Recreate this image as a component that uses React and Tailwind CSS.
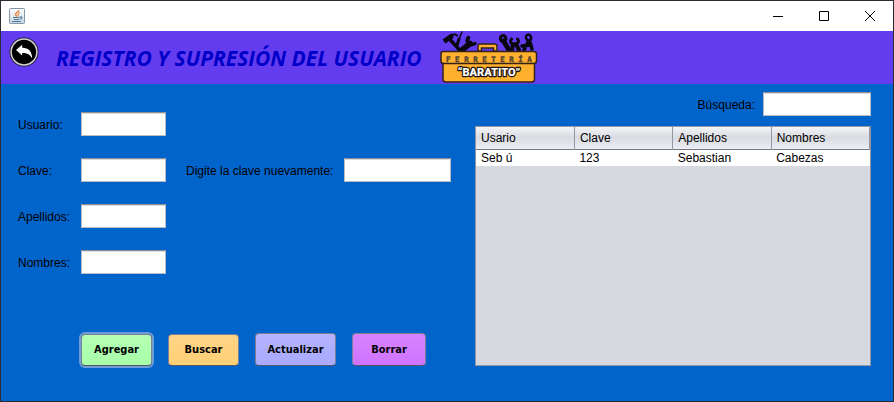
import React from "react";

const fieldClass =
  "h-6 rounded-none border border-[#b9bcc4] border-t-[#8c8e94] bg-white px-1 text-xs text-black shadow-[inset_0_1px_0_#dcdde0] outline-none";

const labelClass = "whitespace-nowrap pt-0.5 leading-4";

const buttonClass =
  "rounded-[4px] border border-[#7d7f99] border-b-[#55586c] text-center font-['DejaVu_Sans_Condensed','DejaVu_Sans',sans-serif] text-[11px] font-bold leading-4 text-black";

function JavaIcon() {
  return (
    <svg width="16" height="16" viewBox="0 0 16 16" fill="none" aria-hidden="true">
      <defs>
        <linearGradient id="java-bg" x1="0" y1="0" x2="0" y2="1">
          <stop offset="0" stopColor="#ffffff" />
          <stop offset="1" stopColor="#c9d6e2" />
        </linearGradient>
      </defs>
      <rect x=".5" y=".5" width="15" height="15" rx="1" fill="url(#java-bg)" stroke="#8296aa" />
      <path d="M9.800 2.200C10 4 5.600 5 6.500 6.800C6.900 7.500 7.700 7.800 7.800 8.600" stroke="#e8833a" strokeWidth="1.400" />
      <path d="M10.800 4.600C8.600 5.300 9.800 6.500 8.800 8.200" stroke="#e8833a" strokeWidth="1.100" />
      <path d="M4 9.500H10.800M4.800 11.500H10.200M3 13.500H12" stroke="#50789c" strokeWidth="1" />
      <path d="M11 8.900C13.800 8.400 13.400 10.900 10.800 11.300" stroke="#50789c" strokeWidth="1.100" />
    </svg>
  );
}

function BackIcon() {
  return (
    <svg width="30" height="30" viewBox="0 0 30 30" aria-hidden="true">
      <circle cx="15" cy="15" r="14.500" fill="#16131c" />
      <circle cx="15" cy="15" r="12.900" fill="#000" stroke="#d4d2d2" strokeWidth="1.500" />
      <path
        d="M7 13L13.200 7.800V10.800C19 10.600 23 14 23.200 21.500C21 17.500 18.500 15.900 13.200 15.900V18.600Z"
        fill="#fff"
      />
    </svg>
  );
}

function Logo() {
  return (
    <svg width="98" height="54" viewBox="0 0 98 54" role="img" aria-label="Ferretería Baratito">
      <g fill="none" stroke="#090811" strokeLinecap="round" strokeLinejoin="round">
        <path d="M10 9.500L20 20.500" strokeWidth="3.500" />
        <path d="M4 11.500L12.500 5.500" strokeWidth="5" strokeLinecap="butt" />
        <path d="M11 5.500Q14.500 3.500 17 5.500" strokeWidth="2.200" />
        <path d="M22 2L19 9" strokeWidth="1.500" />
        <path d="M19 9L17 15" strokeWidth="3" />
        <path d="M22 20L30 13.500" strokeWidth="5.500" />
        <path d="M28.500 7.500C25.500 11 29 17 35 13.500" strokeWidth="3.500" />
        <path d="M64 5.500C59.500 5 59 11 63.500 11.500C66 11 67 8 65 6.500" strokeWidth="3" />
        <path d="M63.500 11L69 20" strokeWidth="5" />
        <path d="M71.500 9C69 12 72 15 75 14.500C78 14 79.500 11 77.500 9" strokeWidth="3" />
        <path d="M73 14L72 20M76 14L79 20" strokeWidth="4" />
        <path d="M86.500 9C84 5 90 2.500 91 7C92 10 88 12 86.500 9Z" strokeWidth="2.500" />
        <path d="M88 12L84 20M90 12L92 19M82 16L90 15" strokeWidth="3.500" />
      </g>
      <path
        d="M38 21V16Q38 14 40 14H55Q57 14 57 16V21H53.500V18H41.500V21Z"
        fill="#ffb02e"
        stroke="#33231a"
        strokeWidth="1.500"
      />
      <path d="M3 33H94.500V49Q94.500 52 91.500 52H6Q3 52 3 49Z" fill="#ffb02e" stroke="#33231a" strokeWidth="1.500" />
      <path
        d="M3 21.500H94Q96.500 21.500 96.500 24V31Q96.500 33.500 93.500 33.500H4Q1 33.500 1 31V24Q1 21.500 3 21.500Z"
        fill="#ffb02e"
        stroke="#33231a"
        strokeWidth="1.500"
      />
      <text
        x="49"
        y="32"
        textAnchor="middle"
        fontFamily="'DejaVu Sans Mono', monospace"
        fontSize="7.500"
        fontWeight="700"
        fill="#55452f"
        stroke="#55452f"
        strokeWidth=".4"
      >
        F E R R E T E R Í A
      </text>
      <text
        x="49"
        y="46"
        textAnchor="middle"
        fontFamily="Roboto, 'Open Sans', sans-serif"
        fontSize="11"
        fontWeight="900"
        fill="#fff"
        stroke="#20150e"
        strokeWidth="2.500"
        strokeLinejoin="round"
        paintOrder="stroke"
      >
        “BARATITO”
      </text>
    </svg>
  );
}

function TitleBar() {
  return (
    <div className="flex h-[30px] items-center bg-white pl-2">
      <JavaIcon />
      <div className="ml-auto flex h-full">
        <button type="button" aria-label="Minimizar" className="flex w-[46px] items-center justify-center">
          <svg width="10" height="10" viewBox="0 0 10 10" aria-hidden="true">
            <path d="M0 5.500H10" stroke="#000" />
          </svg>
        </button>
        <button type="button" aria-label="Maximizar" className="flex w-[46px] items-center justify-center">
          <svg width="10" height="10" viewBox="0 0 10 10" aria-hidden="true">
            <path d="M.5 .5H9.500V9.500H.5Z" fill="none" stroke="#000" />
          </svg>
        </button>
        <button type="button" aria-label="Cerrar" className="flex w-[46px] items-center justify-center">
          <svg width="10" height="10" viewBox="0 0 10 10" aria-hidden="true">
            <path d="M0 0L10 10M10 0L0 10" stroke="#000" />
          </svg>
        </button>
      </div>
    </div>
  );
}

function Header() {
  return (
    <header className="flex h-[53px] items-start bg-[#643cf0] pl-2">
      <button type="button" aria-label="Volver" className="mt-[6px]">
        <BackIcon />
      </button>
      <h1 className="ml-[17px] w-[384px] self-center whitespace-nowrap font-['Comic_Sans_MS','Open_Sans',sans-serif] text-[21px] font-bold italic leading-6 text-[#0000c8]">
        REGISTRO Y SUPRESIÓN DEL USUARIO
      </h1>
      <div className="-mt-px shrink-0">
        <Logo />
      </div>
    </header>
  );
}

function UserForm() {
  return (
    <form className="shrink-0 pt-5" onSubmit={(e) => e.preventDefault()}>
      <div className="grid grid-cols-[63px_85px_178px_107px] items-center gap-y-[22px]">
        <label htmlFor="usuario" className={labelClass}>Usuario:</label>
        <input id="usuario" type="text" className={fieldClass} />
        <label htmlFor="clave" className={labelClass + " col-start-1"}>Clave:</label>
        <input id="clave" type="password" className={fieldClass} />
        <label htmlFor="clave2" className={labelClass + " pl-5"}>Digite la clave nuevamente:</label>
        <input id="clave2" type="password" className={fieldClass} />
        <label htmlFor="apellidos" className={labelClass}>Apellidos:</label>
        <input id="apellidos" type="text" className={fieldClass} />
        <label htmlFor="nombres" className={labelClass + " col-start-1"}>Nombres:</label>
        <input id="nombres" type="text" className={fieldClass} />
      </div>
      <div className="mt-[59px] flex items-center gap-4 pl-[63px]">
        <button
          type="button"
          className={buttonClass + " h-8 w-[71px] bg-linear-to-b from-[#b4ffb4] to-[#a8ffa8] ring-2 ring-[#6d9fd4]"}
        >
          Agregar
        </button>
        <button type="button" className={buttonClass + " h-8 w-[71px] bg-linear-to-b from-[#ffd488] to-[#ffd074]"}>
          Buscar
        </button>
        <button type="button" className={buttonClass + " h-[33px] w-[81px] bg-linear-to-b from-[#b4b4ff] to-[#a9a9ff]"}>
          Actualizar
        </button>
        <button type="button" className={buttonClass + " h-[33px] w-[74px] bg-linear-to-b from-[#d682ff] to-[#d074ff]"}>
          Borrar
        </button>
      </div>
    </form>
  );
}

const columns = ["Usario", "Clave", "Apellidos", "Nombres"];
const rows = [["Seb ú", "123", "Sebastian", "Cabezas"]];

function Results() {
  return (
    <section className="flex min-w-0 flex-1 flex-col">
      <div className="flex items-center justify-end gap-2">
        <label htmlFor="busqueda" className={labelClass}>Búsqueda:</label>
        <input id="busqueda" type="text" className={fieldClass + " w-[108px]"} />
      </div>
      <div className="mt-[10px] flex-1 border border-[#9297a1] bg-[#d6d9df]">
        <table className="w-full table-fixed border-collapse text-left">
          <thead>
            <tr className="h-[22px] border-b border-[#6f7480] bg-linear-to-b from-[#f4f5f7] via-[#d9dbe1] to-[#e9ebf2]">
              {columns.map((c) => (
                <th key={c} className="border-r border-[#9297a1] px-[5px] py-0 font-normal leading-4">
                  {c}
                </th>
              ))}
            </tr>
          </thead>
          <tbody>
            {rows.map((r) => (
              <tr key={r[0]} className="h-4 bg-white">
                {r.map((v) => (
                  <td key={v} className="px-[5px] py-0 leading-4">
                    {v}
                  </td>
                ))}
              </tr>
            ))}
          </tbody>
        </table>
      </div>
    </section>
  );
}

export default function App() {
  return (
    <div className="flex min-h-screen flex-col border border-[#2b2b33] bg-[#0064cb] font-['Liberation_Sans',Arial,sans-serif] text-xs text-black">
      <TitleBar />
      <Header />
      <main className="flex flex-1 gap-6 pb-[35px] pl-[17px] pr-[22px] pt-2">
        <UserForm />
        <Results />
      </main>
    </div>
  );
}
